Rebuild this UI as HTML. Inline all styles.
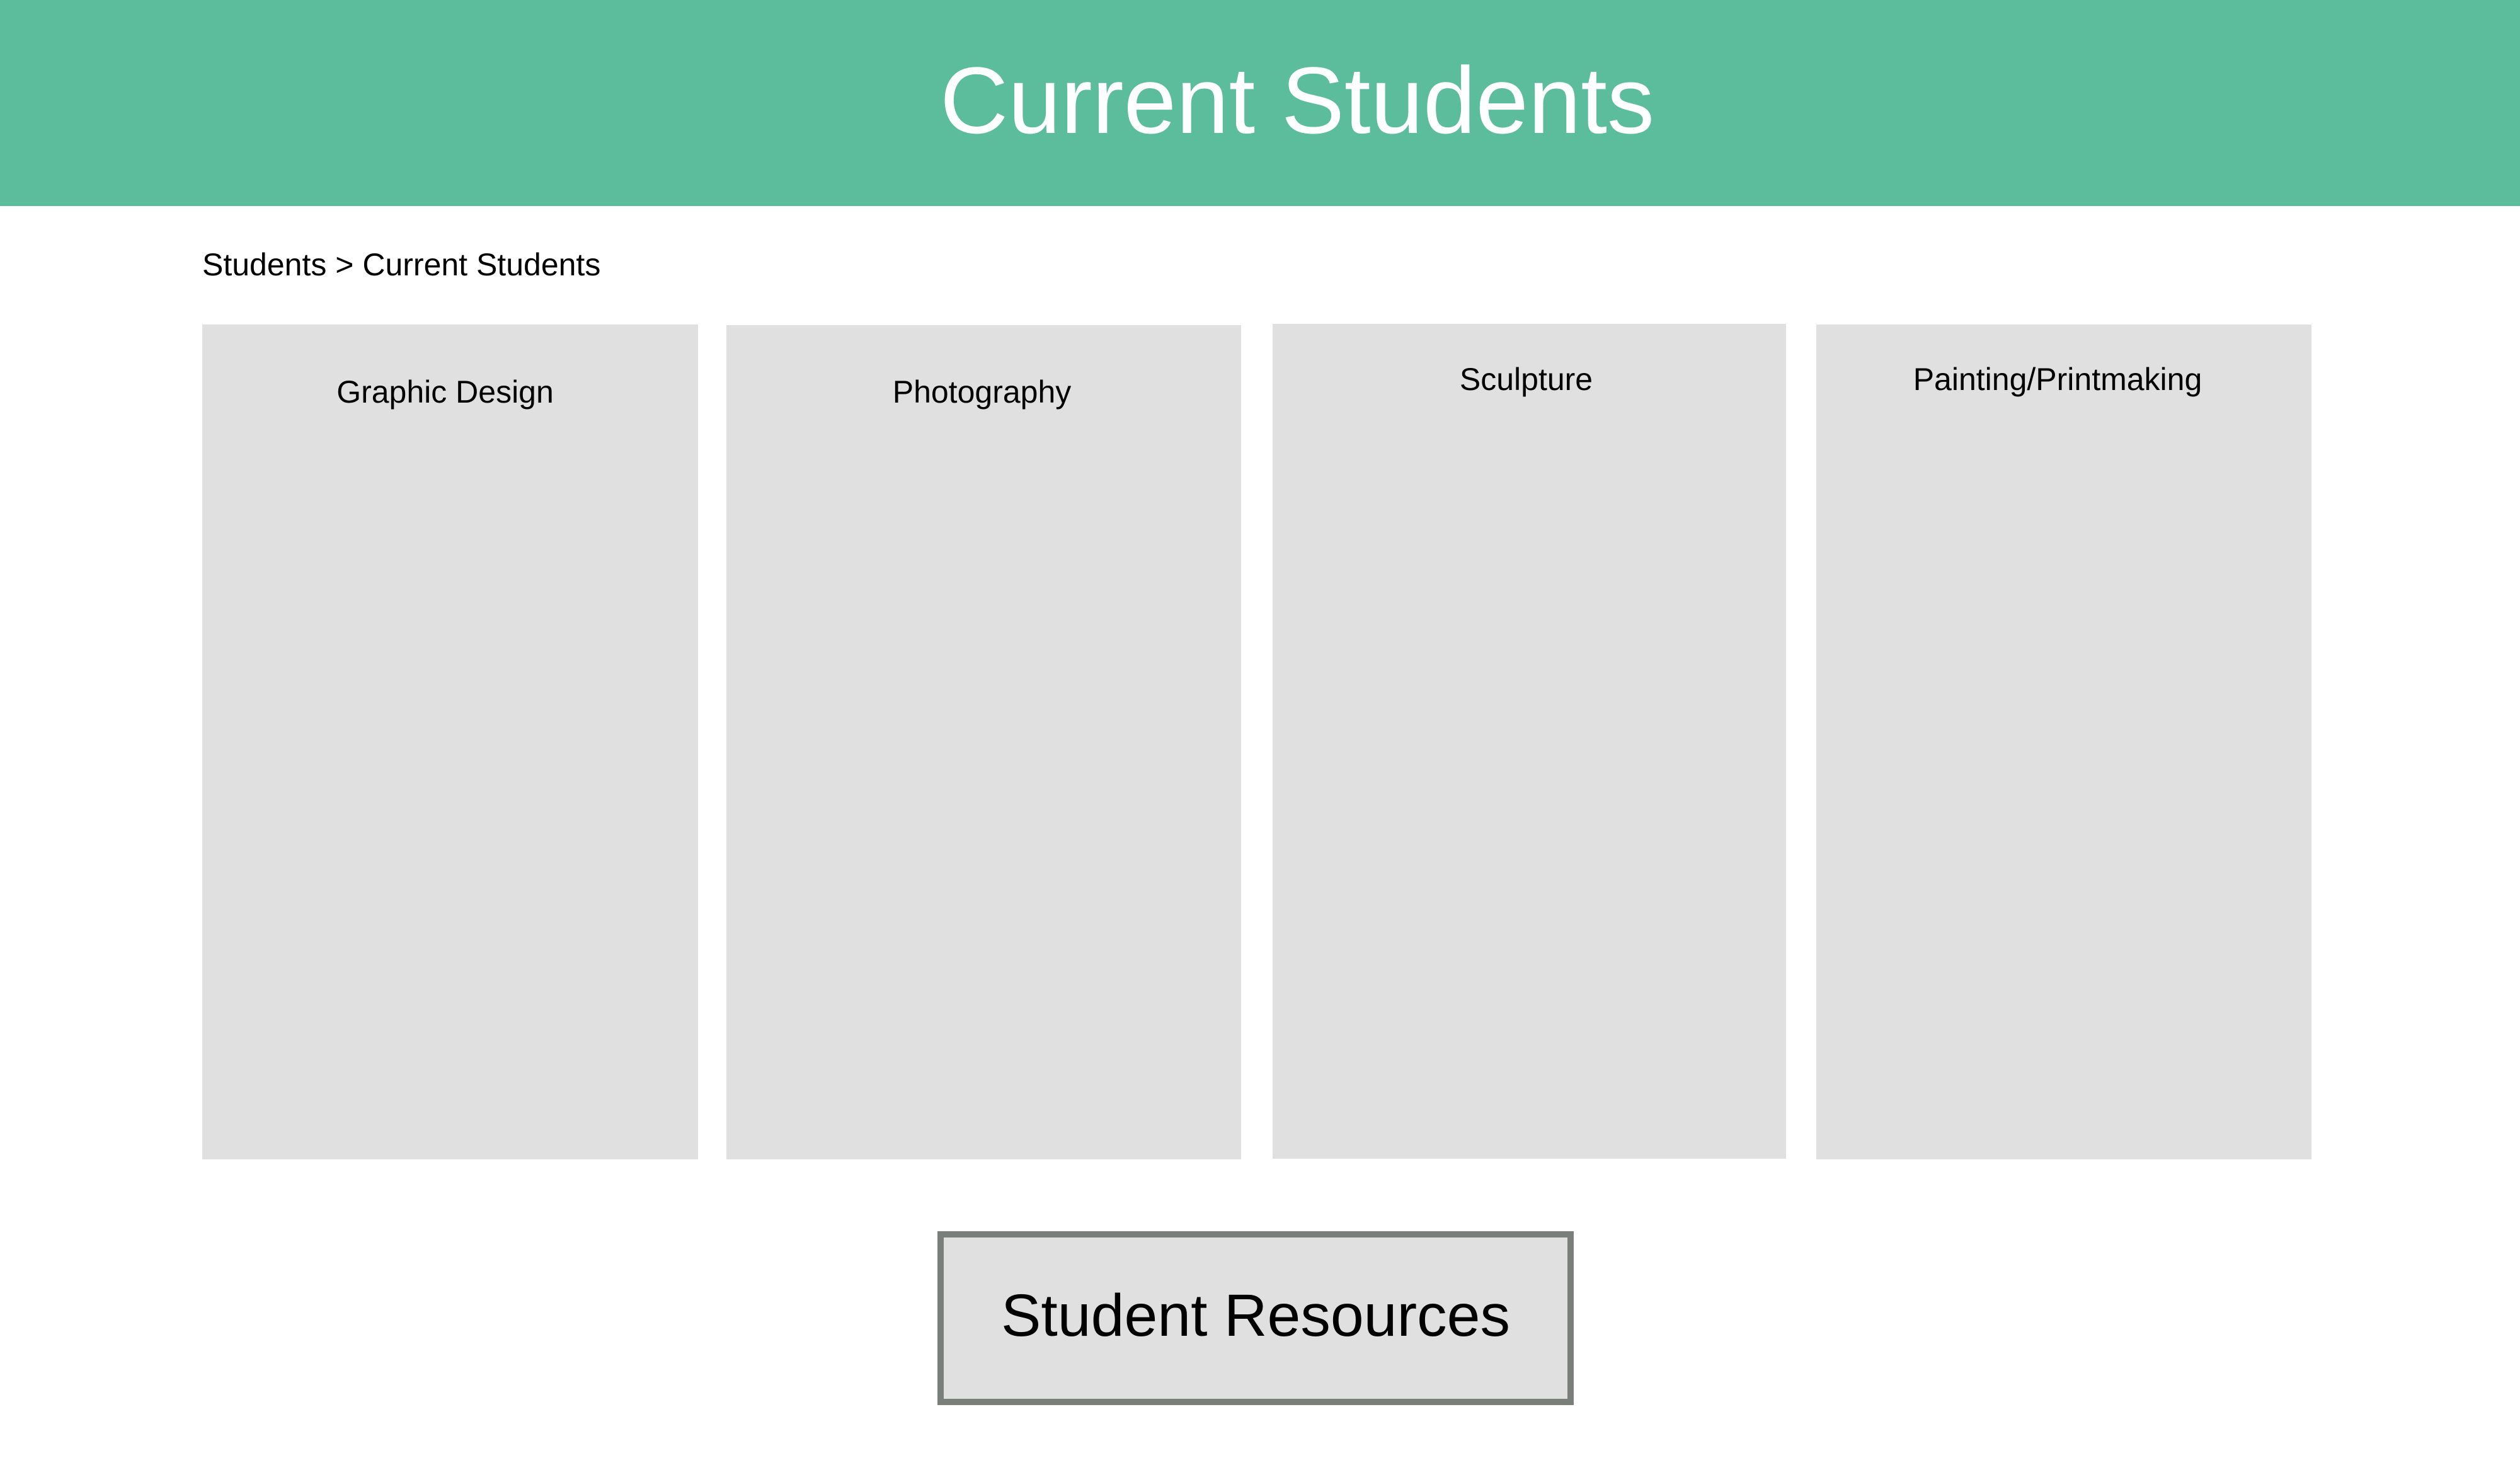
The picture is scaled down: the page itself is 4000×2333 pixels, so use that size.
<!DOCTYPE html>
<html><head><meta charset="utf-8"><style>
*{margin:0;padding:0;box-sizing:border-box}
body{width:4000px;height:2333px;background:#fff;font-family:"Liberation Sans",Arial,sans-serif;position:relative;overflow:hidden;color:#000}
.hdr{position:absolute;left:0;top:0;width:4000px;height:327px;background:#5cbd9c}
.hdr h1{position:absolute;left:59px;width:4000px;top:-4px;line-height:327px;text-align:center;color:#fff;font-weight:normal;font-size:150px}
.bc{position:absolute;left:321px;top:390px;font-size:50px;line-height:60px}
.card{position:absolute;background:#e0e0e0}
.card span{position:absolute;left:0;width:100%;text-align:center;font-size:50px;line-height:60px}
.btn{position:absolute;left:1488px;top:1954px;width:1010px;height:276px;background:#e0e0e0;border:10px solid #7a7f7c;text-align:center;font-size:95px;line-height:248px}
</style></head><body>
<div class="hdr"><h1>Current Students</h1></div>
<div class="bc">Students &gt; Current Students</div>
<div class="card" style="left:321px;top:515px;width:787px;height:1325px"><span style="top:77px;left:-8px">Graphic Design</span></div>
<div class="card" style="left:1153px;top:516px;width:817px;height:1324px"><span style="top:76px;left:-3px">Photography</span></div>
<div class="card" style="left:2020px;top:514px;width:815px;height:1325px"><span style="top:58px;left:-5px">Sculpture</span></div>
<div class="card" style="left:2883px;top:515px;width:786px;height:1325px"><span style="top:57px;left:-10px">Painting/Printmaking</span></div>
<div class="btn">Student Resources</div>
</body></html>
